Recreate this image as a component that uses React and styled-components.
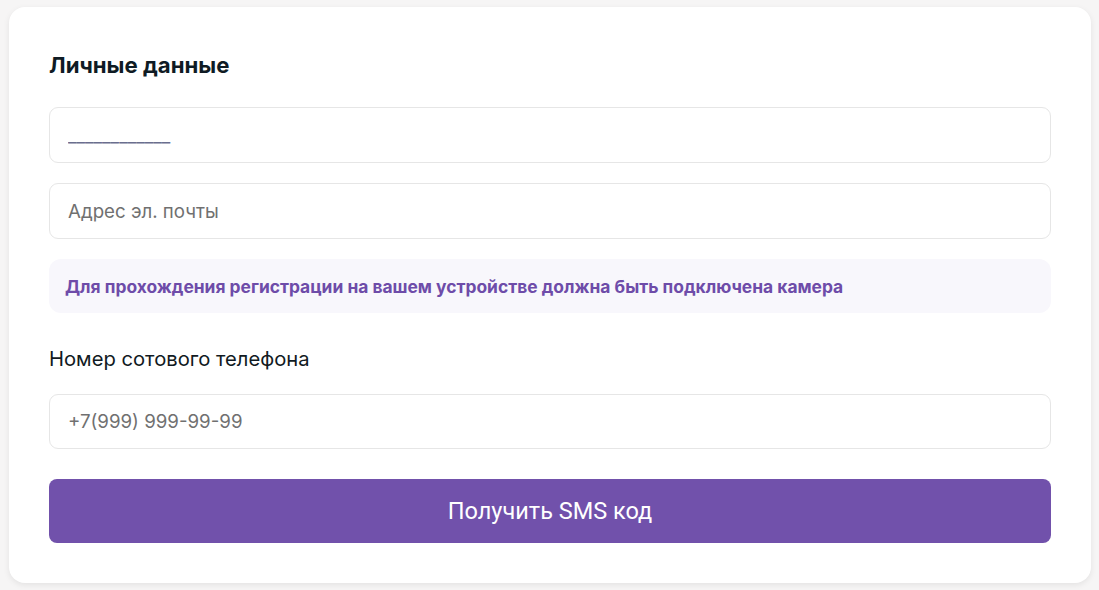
import React from "react";
import styled, { createGlobalStyle } from "styled-components";

const Global = createGlobalStyle`
  html, body {
    margin: 0;
    padding: 0;
    background: #f6f5f5;
  }
  body {
    font-family: "Inter", "Roboto", sans-serif;
  }
`;

const Page = styled.div`
  padding: 7px 8px 8px 9px;
`;

const Card = styled.div`
  background: #fff;
  border-radius: 16px;
  box-shadow: 0 2px 6px rgba(0, 0, 0, 0.08);
  padding: 40px;
  display: flex;
  flex-direction: column;
`;

const Title = styled.h2`
  margin: 0 0 30px;
  padding-top: 5px;
  font-size: 22.2px;
  line-height: 25px;
  font-weight: 700;
  color: #0f1b24;
`;

const Field = styled.input`
  box-sizing: border-box;
  width: 100%;
  height: ${(p) => p.$h || 56}px;
  border: 1px solid #e6e6e6;
  border-radius: 9px;
  padding: 0 18px;
  font-family: "Inter", sans-serif;
  font-size: 18.7px;
  color: #6a6e8e;
  outline: none;
  margin-bottom: 20px;
  &::placeholder {
    color: #707070;
  }
`;

const Notice = styled.div`
  background: #f8f7fc;
  border-radius: 12px;
  height: 54px;
  display: flex;
  align-items: center;
  padding: 0 16px;
  font-size: 17.4px;
  font-weight: 700;
  color: #6e4ca9;
`;

const Label = styled.div`
  margin: 34px 0 23px;
  font-size: 20.2px;
  line-height: 24px;
  color: #111a22;
`;

const Button = styled.button`
  height: 64px;
  border: none;
  border-radius: 8px;
  background: #7151ab;
  color: #fff;
  font-family: "Roboto", sans-serif;
  font-size: 23.5px;
  cursor: pointer;
  margin-top: 10px;
`;

const App = () => {
  return (
    <>
      <Global />
      <Page>
        <Card>
          <Title>Личные данные</Title>
          <Field defaultValue="____________" />
          <Field placeholder="Адрес эл. почты" />
          <Notice>
            Для прохождения регистрации на вашем устройстве должна быть подключена камера
          </Notice>
          <Label>Номер сотового телефона</Label>
          <Field placeholder="+7(999) 999-99-99" $h={55} />
          <Button>Получить SMS код</Button>
        </Card>
      </Page>
    </>
  );
};

export default App;
